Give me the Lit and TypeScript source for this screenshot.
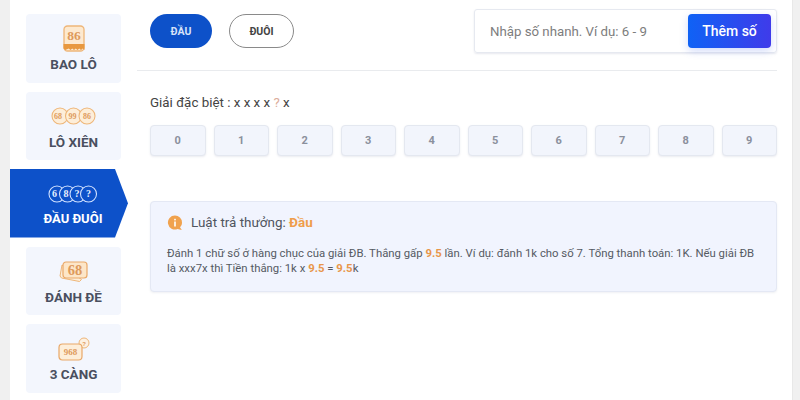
import { LitElement, html, css, svg } from "lit";
import { customElement } from "lit/decorators.js";

const T = "#dd9a5c";
const numText = (x: number, y: number, s: string, size: number, fill: string) =>
  svg`<text x=${x} y=${y} font-size=${size} font-family="Liberation Serif, serif" font-weight="700" text-anchor="middle" fill=${fill}>${s}</text>`;

const iconBao = html`<svg width="22" height="27" viewBox="0 0 22 27">
  <rect x="1" y="1" width="20" height="25" rx="3.500" fill="#fde9cf" stroke="#eeb679" stroke-width="1.300"/>
  <path d="M.5 19h21v6l-1.750-1.600-1.750 1.600-1.750-1.600-1.750 1.600-1.750-1.600-1.750 1.600-1.750-1.600-1.750 1.600-1.750-1.600L2.250 25 .5 23.400z" fill="#e8983f"/>
  ${numText(11, 15, "86", 13.500, T)}
</svg>`;

const circles = (items: string[], dx: number[], stroke: string, fill: string, color: string, size: number, r: number, step: number, w: number) =>
  html`<svg width=${w} height=${r * 2 + 2} viewBox="0 0 ${w} ${r * 2 + 2}">
    ${items.map((_, i) => svg`<circle cx=${r + 1 + i * step} cy=${r + 1} r=${r} fill=${fill} stroke=${stroke} stroke-width="1.100"/>`)}
    ${items.map((s, i) => svg`<text x=${r + 1 + i * step + dx[i]} y=${r + 4} font-size=${size} font-family="Liberation Serif, serif" font-weight="700" text-anchor="middle" fill=${color}>${s}</text>`)}
  </svg>`;

const iconDe = html`<svg width="29" height="21" viewBox="0 0 29 21">
  <path d="M3 4 1 15l1.500 2 18 3.500 2-2z" fill="#fdeed9" stroke="#eeb679" stroke-width="1"/>
  <rect x="4" y="1" width="24" height="16" rx="3" fill="#fde6c8" stroke="#e9a868" stroke-width="1.200"/>
  ${numText(16, 14, "68", 14.500, T)}
</svg>`;

const icon3 = html`<svg width="32" height="24" viewBox="0 0 32 24">
  <circle cx="26" cy="6" r="5" fill="#fdf1e2" stroke="#eeb679" stroke-width="1"/>
  <text x="26" y="8.500" font-size="6" font-family="Liberation Sans, sans-serif" text-anchor="middle" fill=${T}>?</text>
  <rect x="1" y="7" width="23" height="16" rx="3.500" fill="#fdeed9" stroke="#e9a868" stroke-width="1.200"/>
  ${numText(12.500, 18, "968", 9, T)}
</svg>`;

const iconInfo = html`<svg width="17" height="16" viewBox="0 0 17 16">
  <path d="M8 .5a7 7 0 0 1 7 7c0 2-.7 3.600-2 4.800l1.800 2.700-4.300-1a7 7 0 1 1-2.500-13.500z" fill="#f0a24e"/>
  <rect x="7.200" y="6.500" width="1.600" height="5" fill="#fff"/>
  <rect x="7.200" y="3.800" width="1.600" height="1.600" fill="#fff"/>
</svg>`;

@customElement("app-root")
export class AppRoot extends LitElement {
  static styles = css`
    :host {
      display: flex;
      width: 800px;
      height: 400px;
      overflow: hidden;
      background: #fff;
      font-family: Roboto, "Liberation Sans", sans-serif;
      color: #444;
    }
    .gutter { width: 10px; background: #f0f0f0; flex: none; }
    .gutter.r { width: 8px; border-left: 1px solid #e8e8e8; box-sizing: border-box; }
    .side {
      width: 127px;
      flex: none;
      display: flex;
      flex-direction: column;
      gap: 9px;
      padding-top: 14px;
      box-sizing: border-box;
    }
    .item {
      width: 95px;
      height: 68.500px;
      margin-left: 16px;
      background: #f3f6fd;
      border-radius: 4px;
      display: flex;
      flex-direction: column;
      align-items: center;
      padding-top: 8px;
      box-sizing: border-box;
      font-size: 13.500px;
      font-weight: 700;
      color: #4a4f5f;
      line-height: 16px;
      flex: none;
    }
    .slot {
      height: 33px;
      margin-bottom: 1px;
      display: flex;
      align-items: center;
      justify-content: center;
    }
    .item.active {
      width: 118px;
      margin-left: 0;
      padding-left: 8px;
      background: #0d51c9;
      color: #fff;
      border-radius: 0;
      clip-path: polygon(0 0, 105px 0, 100% 50%, 105px 100%, 0 100%);
      font-size: 13px;
    }
    .main {
      flex: 1;
      min-width: 0;
      padding: 9px 15px 0 0;
      box-sizing: border-box;
      display: flex;
      flex-direction: column;
    }
    .top {
      height: 62px;
      box-sizing: border-box;
      border-bottom: 1px solid #e9ebee;
      display: flex;
      align-items: flex-start;
      justify-content: space-between;
      padding-left: 13px;
    }
    .tabs { display: flex; gap: 17px; padding-top: 5px; }
    .tab {
      height: 34px;
      border-radius: 17px;
      display: flex;
      align-items: center;
      justify-content: center;
      font-size: 10.500px;
      font-weight: 700;
      box-sizing: border-box;
    }
    .tab.on { width: 62px; background: #0d51c9; color: #d6e2f8; }
    .tab.off { width: 65px; border: 1px solid #8a8a8a; color: #444; }
    .search {
      width: 303px;
      height: 44px;
      box-sizing: border-box;
      border: 1px solid #e6e9f0;
      border-radius: 3px;
      box-shadow: 0 1px 2px rgba(120,130,160,.18);
      display: flex;
      align-items: center;
      justify-content: space-between;
      padding: 0 5px 0 15px;
      font-size: 13.250px;
      color: #7d7d7d;
    }
    .add {
      width: 83px;
      height: 34px;
      border-radius: 4px;
      background: linear-gradient(90deg, #0f62f5, #3f3bea);
      color: #fff;
      display: flex;
      align-items: center;
      justify-content: center;
      font-size: 14px;
      font-weight: 500;
      box-shadow: 0 3px 8px rgba(50,90,230,.22);
    }
    .body { padding: 24px 0 0 13px; display: flex; flex-direction: column; }
    .label { font-size: 13.350px; line-height: 16px; color: #444; }
    .q { color: #dcae9b; }
    .nums {
      margin-top: 14px;
      display: grid;
      grid-template-columns: repeat(10, 1fr);
      column-gap: 8px;
    }
    .num {
      height: 31px;
      box-sizing: border-box;
      background: #f2f5fc;
      border: 1px solid #e4e8f0;
      border-radius: 4px;
      box-shadow: 0 1px 2px rgba(120,130,160,.15);
      display: flex;
      align-items: center;
      justify-content: center;
      font-size: 11px;
      font-weight: 700;
      color: #8b909c;
    }
    .info {
      margin-top: 45px;
      height: 91px;
      box-sizing: border-box;
      background: #f1f4fe;
      border: 1px solid #e4e8f4;
      border-radius: 4px;
      padding: 13px 20px 0 16px;
      box-shadow: 0 1px 2px rgba(120,130,160,.12);
    }
    .head {
      display: flex;
      align-items: center;
      gap: 7px;
      font-size: 13.450px;
      line-height: 16px;
      color: #50555f;
    }
    .head b { color: #ef9d4b; font-weight: 700; }
    .desc {
      margin-top: 15px;
      font-size: 11.350px;
      line-height: 15.300px;
      color: #555a63;
    }
    .desc b { color: #e8964a; font-weight: 700; }
  `;

  render() {
    return html`
      <div class="gutter"></div>
      <nav class="side">
        <div class="item"><div class="slot">${iconBao}</div><span>BAO LÔ</span></div>
        <div class="item"><div class="slot">${circles(["68", "99", "86"], [-2, -1, 0], "#eeb679", "#fdeed9", T, 8, 8, 13.500, 45)}</div><span>LÔ XIÊN</span></div>
        <div class="item active"><div class="slot">${circles(["6", "8", "?", "?"], [-2.500, -1.500, -1, 0], "#cfe0ff", "#0d51c9", "#e6efff", 10, 8, 10.500, 50)}</div><span>ĐẦU ĐUÔI</span></div>
        <div class="item"><div class="slot">${iconDe}</div><span>ĐÁNH ĐỀ</span></div>
        <div class="item"><div class="slot">${icon3}</div><span>3 CÀNG</span></div>
      </nav>
      <main class="main">
        <div class="top">
          <div class="tabs">
            <div class="tab on">ĐẦU</div>
            <div class="tab off">ĐUÔI</div>
          </div>
          <div class="search">
            <span>Nhập số nhanh. Ví dụ: 6 - 9</span>
            <div class="add">Thêm số</div>
          </div>
        </div>
        <div class="body">
          <div class="label"><span>Giải đặc biệt : x x x x </span><span class="q">?</span><span> x</span></div>
          <div class="nums">
            ${[0, 1, 2, 3, 4, 5, 6, 7, 8, 9].map((n) => html`<div class="num">${n}</div>`)}
          </div>
          <section class="info">
            <div class="head">${iconInfo}<div><span>Luật trả thưởng: </span><b>Đầu</b></div></div>
            <div class="desc"><span>Đánh 1 chữ số ở hàng chục của giải ĐB. Thắng gấp </span><b>9.5</b><span> lần. Ví dụ: đánh 1k cho số 7. Tổng thanh toán: 1K. Nếu giải ĐB là xxx7x thì Tiền thắng: 1k x </span><b>9.5</b><span> = </span><b>9.5</b><span>k</span></div>
          </section>
        </div>
      </main>
      <div class="gutter r"></div>
    `;
  }
}
